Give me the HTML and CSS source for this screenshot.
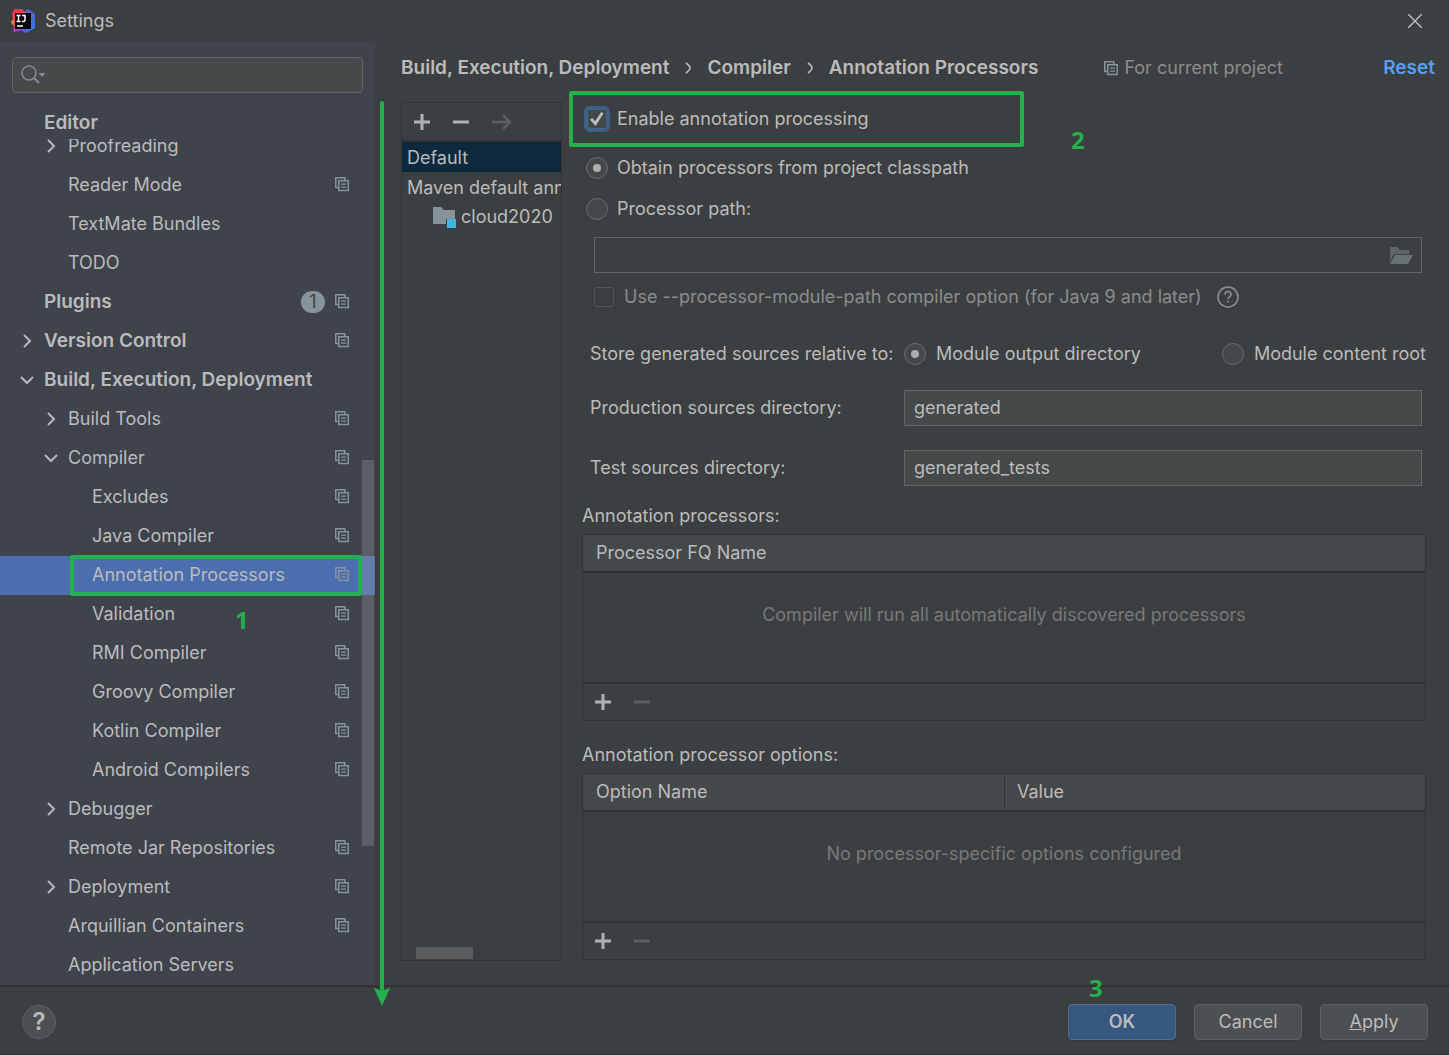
FILE: index.html
```html
<!DOCTYPE html>
<html lang="en">
<head>
<meta charset="utf-8">
<title>Settings</title>
<link rel="stylesheet" href="styles.css">
</head>
<body>
<svg class="defs" aria-hidden="true">
  <symbol id="project" viewBox="0 0 14 15"><path d="M3 10.5H.75V.75h9V3M3.75 3.75h9.500v9.750h-9.500z" fill="none" stroke="currentColor" stroke-width="1.5"/><path d="M6 7.200h5M6 10.200h5" stroke="currentColor" stroke-width="1.300"/></symbol>
  <symbol id="right" viewBox="0 0 16 16"><path d="M5 2l6 6-6 6" fill="none" stroke="currentColor" stroke-width="2"/></symbol>
  <symbol id="down" viewBox="0 0 16 16"><path d="M2 5l6 6 6-6" fill="none" stroke="currentColor" stroke-width="2"/></symbol>
  <symbol id="plus" viewBox="0 0 16 16"><path d="M8 0v16M0 8h16" stroke="currentColor" stroke-width="3"/></symbol>
  <symbol id="minus" viewBox="0 0 16 16"><path d="M0 8h16" stroke="currentColor" stroke-width="3"/></symbol>
  <symbol id="crumb" viewBox="0 0 6 12"><path d="M1 1q4 3 4 5t-4 5" fill="none" stroke="currentColor" stroke-width="1.600"/></symbol>
</svg>

<header class="titlebar">
  <svg class="logo" viewBox="0 0 24 24" aria-hidden="true">
    <defs>
      <linearGradient id="lg1" x1="0" y1="0" x2="0" y2="1"><stop offset="0" stop-color="#ff2d55"/><stop offset=".55" stop-color="#fb4a4a"/><stop offset="1" stop-color="#a63ad0"/></linearGradient>
      <linearGradient id="lg2" x1="0" y1="0" x2="1" y2="1"><stop offset="0" stop-color="#2f7df0"/><stop offset=".4" stop-color="#5b5ad8"/><stop offset="1" stop-color="#2784f2"/></linearGradient>
    </defs>
    <path d="M13 3l4-3 7 5v14l-9 5-6-3z" fill="url(#lg2)"/>
    <path d="M3 0h8l4 4-1 10-5 8-7 1 1-6-3-3 2-4-1-5z" fill="url(#lg1)"/>
    <path d="M0 13l3-3v6z" fill="#ff8a1e"/>
    <path d="M4 4h16v16H4z" fill="#050505"/>
    <path d="M5.500 6.500h4M7.500 6.500v6M5.500 12.500h4M11 6.500h3v4.500q0 1.500-1.500 1.500h-1.500M6 17h6" fill="none" stroke="#fff" stroke-width="1.500"/>
  </svg>
  <h1>Settings</h1>
  <button class="close" aria-label="Close"><svg viewBox="0 0 14 14"><path d="M0 0l14 14M14 0L0 14" stroke="#bbb" stroke-width="1.500"/></svg></button>
</header>

<main class="main">
  <aside class="sidebar">
    <div class="search">
      <svg viewBox="0 0 26 20" aria-hidden="true"><circle cx="8" cy="8" r="7" fill="none" stroke="#7f8b91" stroke-width="1.600"/><path d="M13 13l5 5" stroke="#7f8b91" stroke-width="2.200"/><path d="M17.500 8h7l-3.500 4z" fill="#7f8b91"/></svg>
      <input type="search" aria-label="Search settings">
    </div>
    <nav class="tree" aria-label="Settings categories">
      <a class="node l1 sticky" href="#">Editor</a>
      <div class="clip"><a class="node l2" href="#"><svg class="arrow"><use href="#right"/></svg>Proofreading</a></div>
      <a class="node l2" href="#">Reader Mode<svg class="proj"><use href="#project"/></svg></a>
      <a class="node l2" href="#">TextMate Bundles</a>
      <a class="node l2" href="#">TODO</a>
      <a class="node l1" href="#">Plugins<span class="count">1</span><svg class="proj"><use href="#project"/></svg></a>
      <a class="node l1" href="#"><svg class="arrow"><use href="#right"/></svg>Version Control<svg class="proj"><use href="#project"/></svg></a>
      <a class="node l1" href="#"><svg class="arrow"><use href="#down"/></svg>Build, Execution, Deployment</a>
      <a class="node l2" href="#"><svg class="arrow"><use href="#right"/></svg>Build Tools<svg class="proj"><use href="#project"/></svg></a>
      <a class="node l2" href="#"><svg class="arrow"><use href="#down"/></svg>Compiler<svg class="proj"><use href="#project"/></svg></a>
      <a class="node l3" href="#">Excludes<svg class="proj"><use href="#project"/></svg></a>
      <a class="node l3" href="#">Java Compiler<svg class="proj"><use href="#project"/></svg></a>
      <a class="node l3 selected" href="#" aria-current="page">Annotation Processors<svg class="proj"><use href="#project"/></svg></a>
      <a class="node l3" href="#">Validation<svg class="proj"><use href="#project"/></svg><b class="mark mark-one">1</b></a>
      <a class="node l3" href="#">RMI Compiler<svg class="proj"><use href="#project"/></svg></a>
      <a class="node l3" href="#">Groovy Compiler<svg class="proj"><use href="#project"/></svg></a>
      <a class="node l3" href="#">Kotlin Compiler<svg class="proj"><use href="#project"/></svg></a>
      <a class="node l3" href="#">Android Compilers<svg class="proj"><use href="#project"/></svg></a>
      <a class="node l2" href="#"><svg class="arrow"><use href="#right"/></svg>Debugger</a>
      <a class="node l2" href="#">Remote Jar Repositories<svg class="proj"><use href="#project"/></svg></a>
      <a class="node l2" href="#"><svg class="arrow"><use href="#right"/></svg>Deployment<svg class="proj"><use href="#project"/></svg></a>
      <a class="node l2" href="#">Arquillian Containers<svg class="proj"><use href="#project"/></svg></a>
      <a class="node l2" href="#">Application Servers</a>
    </nav>
    <div class="thumb"></div>
    <div class="flow-arrow"></div>
  </aside>

  <section class="content">
    <div class="crumbs">
      <span>Build, Execution, Deployment</span>
      <svg class="sep"><use href="#crumb"/></svg>
      <span>Compiler</span>
      <svg class="sep"><use href="#crumb"/></svg>
      <span>Annotation Processors</span>
      <span class="scope"><svg class="proj"><use href="#project"/></svg>For current project</span>
      <a class="reset" href="#">Reset</a>
    </div>

    <div class="columns">
      <div class="profiles">
        <div class="tools">
          <button aria-label="Add profile"><svg><use href="#plus"/></svg></button>
          <button aria-label="Remove profile"><svg><use href="#minus"/></svg></button>
          <button class="move" aria-label="Move to" disabled><svg viewBox="0 0 20 16"><path d="M0 8h18M11 1l7 7-7 7" fill="none" stroke="currentColor" stroke-width="2.600"/></svg></button>
        </div>
        <ul>
          <li class="current">Default</li>
          <li>Maven default annotation processors profile</li>
          <li class="module"><svg viewBox="0 0 24 22" aria-hidden="true"><path d="M0 0h8l3 3h11v9h-9v5H0z" fill="#87939a"/><path d="M14 12h9v9h-9z" fill="#40b6e0"/></svg>cloud2020</li>
        </ul>
        <div class="hthumb"></div>
      </div>

      <form class="form">
        <div class="enable">
          <label class="option"><span class="cell"><input class="check focused" type="checkbox" checked></span>Enable annotation processing</label>
          <b class="mark mark-two">2</b>
        </div>
        <label class="option radio-row"><span class="cell"><input class="radio" type="radio" name="source" checked></span>Obtain processors from project classpath</label>
        <label class="option radio-row"><span class="cell"><input class="radio" type="radio" name="source"></span>Processor path:</label>
        <div class="path">
          <input type="text" aria-label="Processor path" disabled>
          <button type="button" aria-label="Browse" disabled><svg viewBox="0 0 24 18"><path d="M1 0h7l3 3h9v4H5L1 15z" fill="#5d6567"/><path d="M6 8h18l-5 9H1z" fill="#687174"/></svg></button>
        </div>
        <div class="module-path">
          <label><input class="check" type="checkbox" disabled>Use --processor-module-path compiler option (for Java 9 and later)</label>
          <button type="button" class="hint" aria-label="Help"><svg viewBox="0 0 22 22"><circle cx="11" cy="11" r="10" fill="none" stroke="#87939a" stroke-width="1.500"/><path d="M8 8.500q0-3 3-3t3 2.800q0 1.500-1.500 2.500T11 13M11 14.500v2" fill="none" stroke="#87939a" stroke-width="1.600"/></svg></button>
        </div>
        <div class="fields">
          <span>Store generated sources relative to:</span>
          <div class="choices">
            <label><input class="radio" type="radio" name="relative" checked>Module output directory</label>
            <label><input class="radio" type="radio" name="relative">Module content root</label>
          </div>
          <label for="prod">Production sources directory:</label>
          <input class="text" id="prod" type="text" value="generated">
          <label for="test">Test sources directory:</label>
          <input class="text" id="test" type="text" value="generated_tests">
        </div>

        <h2>Annotation processors:</h2>
        <div class="panel">
          <table>
            <thead><tr><th>Processor FQ Name</th></tr></thead>
            <tbody><tr><td>Compiler will run all automatically discovered processors</td></tr></tbody>
          </table>
          <div class="tools">
            <button type="button" aria-label="Add processor"><svg><use href="#plus"/></svg></button>
            <button type="button" aria-label="Remove processor" disabled><svg><use href="#minus"/></svg></button>
          </div>
        </div>

        <h2 class="options-title">Annotation processor options:</h2>
        <div class="panel">
          <table>
            <thead><tr><th>Option Name</th><th>Value</th></tr></thead>
            <tbody><tr><td colspan="2">No processor-specific options configured</td></tr></tbody>
          </table>
          <div class="tools">
            <button type="button" aria-label="Add option"><svg><use href="#plus"/></svg></button>
            <button type="button" aria-label="Remove option" disabled><svg><use href="#minus"/></svg></button>
          </div>
        </div>
      </form>
    </div>
  </section>
</main>

<footer class="footer">
  <button class="help" aria-label="Help">?</button>
  <div class="actions">
    <b class="mark mark-three">3</b>
    <button class="btn primary">OK</button>
    <button class="btn">Cancel</button>
    <button class="btn"><u>A</u>pply</button>
  </div>
</footer>
</body>
</html>
```

FILE: styles.css
```css
*, *::before, *::after { box-sizing: border-box; }

body {
  margin: 0;
  min-height: 100vh;
  display: flex;
  flex-direction: column;
  background: #3c3f41;
  color: #bbb;
  font: 18px/24px Inter, "Liberation Sans", sans-serif;
}

a { color: inherit; text-decoration: none; }
button { padding: 0; border: 0; background: none; color: inherit; font: inherit; }
input { margin: 0; color: inherit; font: inherit; }
svg { display: block; flex: none; }
h1, h2 { margin: 0; font-size: 18px; font-weight: 400; }
.defs { position: absolute; width: 0; height: 0; }

/* Title bar */
.titlebar { display: flex; align-items: center; height: 42px; padding: 0 27px 0 11px; }
.logo { width: 24px; height: 24px; margin-right: 10px; }
.close { margin-left: auto; }
.close svg { width: 14px; height: 14px; }

.main { display: flex; flex: 1; }

/* Sidebar */
.sidebar { position: relative; flex: none; width: 375px; padding-top: 15px; background: #3f434c; }
.search {
  display: flex;
  align-items: center;
  height: 36px;
  margin: 0 12px 11px;
  padding-left: 8px;
  border: 1px solid #646464;
  border-radius: 4px;
  background: #45494a;
}
.search svg { width: 26px; height: 20px; }
.search input { flex: 1; min-width: 0; border: 0; outline: 0; background: none; }

.node { position: relative; display: flex; align-items: center; height: 39px; padding-right: 26px; padding-bottom: 2px; }
.l1 { padding-left: 44px; font-size: 19px; font-weight: 600; }
.l2 { padding-left: 68px; }
.l3 { padding-left: 92px; }
.sticky { height: 35px; padding-top: 4px; }
.clip { display: flex; flex-direction: column; justify-content: flex-end; height: 27px; overflow: hidden; }
.clip .node { flex: none; }
.arrow { width: 16px; height: 16px; margin: 0 9px 0 -25px; color: #b4b8ba; }
.proj { width: 14px; height: 15px; margin-left: auto; color: #87939a; }
.count {
  width: 24px;
  height: 22px;
  margin-left: auto;
  border-radius: 11px;
  background: #87939a;
  color: #3f434c;
  font-size: 18px;
  font-weight: 400;
  line-height: 22px;
  text-align: center;
}
.count + .proj { margin-left: 10px; }
.selected { background: #4b6eaf; }
.selected::after {
  content: "";
  position: absolute;
  z-index: 2;
  inset: -1px 13px -1px 70px;
  border: 4px solid #22b14c;
  border-radius: 2px;
}
.thumb { position: absolute; top: 418px; right: 1px; width: 12px; height: 386px; background: rgba(166, 166, 166, .28); }

/* Green guide marks */
.mark { position: absolute; color: #22b14c; font: 700 24px/24px "Noto Sans", sans-serif; }
.mark-one { left: 235px; top: 13px; }
.mark-two { left: 489px; top: 34px; }
.mark-three { left: 21px; top: -28px; }
.flow-arrow { position: absolute; z-index: 2; left: 380px; top: 59px; bottom: -6px; width: 4px; border-radius: 2px; background: #22b14c; }
.flow-arrow::after {
  content: "";
  position: absolute;
  left: -6px;
  bottom: -15px;
  width: 16px;
  height: 18px;
  background: #22b14c;
  clip-path: polygon(0 0, 50% 15%, 100% 0, 50% 100%);
}

/* Content */
.content { display: flex; flex: 1; flex-direction: column; min-width: 0; padding: 0 14px 24px 26px; }
.crumbs { display: flex; align-items: center; height: 52px; font-size: 19px; font-weight: 600; white-space: nowrap; }
.sep { width: 6px; height: 12px; margin: 0 16px; }
.scope { display: flex; align-items: center; gap: 6px; margin-left: 66px; color: #8c8c8c; font-size: 18px; font-weight: 400; }
.reset { margin-left: auto; color: #589df6; }
.columns { display: flex; flex: 1; gap: 20px; }

.profiles {
  position: relative;
  flex: none;
  width: 161px;
  margin-top: 8px;
  border: 1px solid #323232;
  overflow: hidden;
}
.tools { display: flex; align-items: center; gap: 23px; height: 35px; padding-left: 12px; }
.tools svg { width: 16px; height: 16px; color: #afb1b3; }
.tools :disabled svg { color: #5b5d5e; }
.tools .move svg { width: 20px; }
.profiles .tools { height: 39px; border-bottom: 2px solid #323232; }
.profiles ul { margin: 0; padding: 0; list-style: none; }
.profiles li { height: 30px; padding-left: 5px; line-height: 32px; white-space: nowrap; }
.profiles .current { background: #0d293e; }
.profiles .module { display: flex; align-items: center; gap: 4px; padding-left: 31px; }
.module svg { width: 24px; height: 22px; margin-top: 2px; }
.hthumb { position: absolute; left: 14px; bottom: 1px; width: 57px; height: 12px; background: #5a5b5c; }

/* Form */
.form { flex: 1; min-width: 0; padding-right: 9px; }
.enable { position: relative; height: 53px; }
.enable::before {
  content: "";
  position: absolute;
  left: -13px;
  top: -3px;
  width: 455px;
  height: 56px;
  border: 4px solid #22b14c;
  border-radius: 2px;
}
.option { display: flex; align-items: center; gap: 7px; padding-left: 2px; }
.enable .option { position: relative; height: 50px; }
.radio-row { height: 41px; }
.cell { display: flex; justify-content: center; width: 26px; }
.radio {
  display: grid;
  place-items: center;
  flex: none;
  width: 22px;
  height: 22px;
  appearance: none;
  border: 1px solid #6b6b6b;
  border-radius: 50%;
  background: #43494a;
}
.radio:checked::before { content: ""; width: 8px; height: 8px; border-radius: 50%; background: #adadad; }
.check {
  flex: none;
  width: 20px;
  height: 20px;
  appearance: none;
  border: 1px solid #6b6b6b;
  border-radius: 3px;
  background: #43494a;
}
.check:disabled { border-color: #555; background: #3c3f41; }
.focused { border-color: #43698e; outline: 3px solid #3d6185; }
.check:checked::before {
  content: "";
  display: block;
  width: 14px;
  height: 14px;
  margin: 2px;
  background: #bbb;
  clip-path: polygon(0 55%, 16% 43%, 36% 66%, 80% 0, 97% 10%, 40% 100%);
}
.path { position: relative; height: 36px; margin: 8px 4px 0 12px; }
.path input { display: block; width: 100%; height: 36px; border: 1px solid #646464; background: none; }
.path button { position: absolute; right: 9px; top: 10px; }
.path svg { width: 24px; height: 18px; }
.module-path { display: flex; align-items: center; gap: 15px; height: 24px; margin: 12px 0 33px 12px; color: #8c8c8c; }
.module-path label { display: flex; align-items: center; gap: 10px; }
.hint svg { width: 22px; height: 22px; }

.fields { display: grid; grid-template-columns: 314px 1fr; align-items: center; row-gap: 24px; padding-left: 8px; white-space: nowrap; }
.choices { display: flex; justify-content: space-between; }
.choices label { display: flex; align-items: center; gap: 10px; }
.text { height: 36px; min-width: 0; margin-right: 4px; padding: 0 9px 2px; border: 1px solid #646464; background: #45494a; }

h2 { margin: 18px 0 6px; }
.options-title { margin-top: 22px; }
.panel { height: 187px; border: 1px solid #323232; }
.panel table { width: 100%; border-collapse: collapse; table-layout: fixed; }
.panel th { position: relative; height: 37px; padding: 0 13px; border-bottom: 2px solid #323232; background: #45484a; font-weight: 400; text-align: left; }
.panel th + th::before { content: ""; position: absolute; left: 0; top: 2px; bottom: 2px; width: 1px; background: #323232; }
.panel td { height: 111px; padding: 0 0 26px; border-bottom: 2px solid #323232; color: #787878; text-align: center; }

/* Footer */
.footer { display: flex; align-items: center; justify-content: space-between; height: 70px; padding: 2px 21px 0 22px; border-top: 2px solid #323232; border-bottom: 1px solid #323232; }
.help { width: 34px; height: 34px; border: 1px solid #5e6060; border-radius: 50%; background: #4c5052; font-size: 24px; font-weight: 600; }
.actions { position: relative; display: flex; gap: 18px; }
.btn { width: 108px; height: 36px; border: 1px solid #5e6060; border-radius: 4px; background: #4c5052; box-shadow: 0 1px 1px #353738; }
.primary { border-color: #4c708c; background: #365880; font-weight: 600; }
```
